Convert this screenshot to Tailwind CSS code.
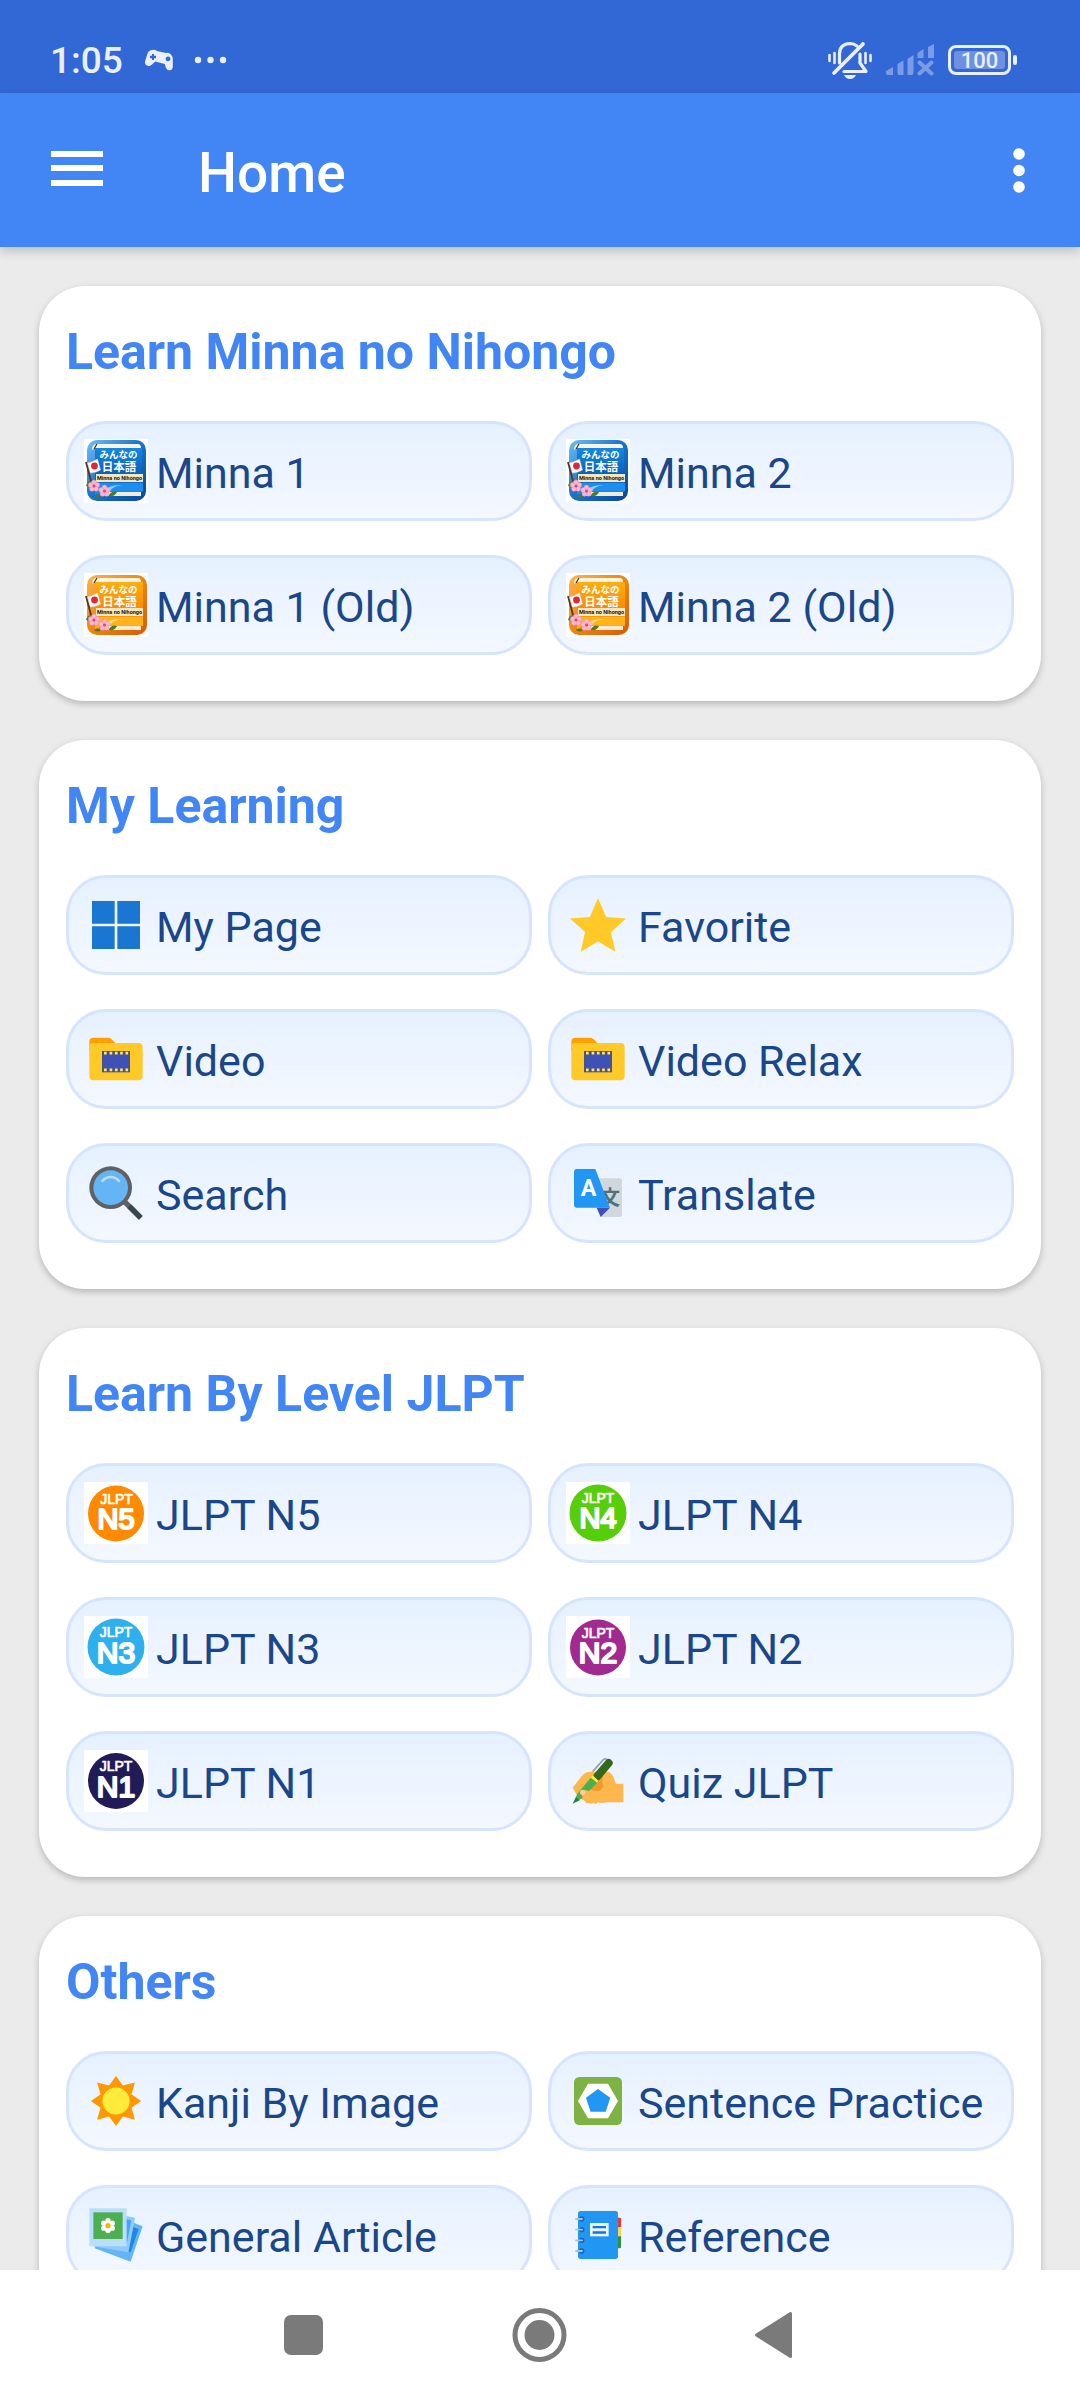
<!DOCTYPE html>
<html lang="en">
<head>
<meta charset="utf-8">
<meta name="viewport" content="width=device-width, initial-scale=1">
<title>Home</title>
<script src="https://cdn.jsdelivr.net/npm/@tailwindcss/browser@4"></script>
</head>
<body class="flex h-screen flex-col overflow-hidden bg-[#ebebeb] font-[Roboto,sans-serif]">

<!-- Shared icon art -->
<svg class="size-0 shrink-0" aria-hidden="true">
  <defs>
    <linearGradient id="blueCase" x1="0" y1="0" x2="1" y2="1"><stop offset="0" stop-color="#6fc0f7"/><stop offset=".45" stop-color="#1a78d0"/><stop offset="1" stop-color="#04489c"/></linearGradient>
    <linearGradient id="blueCover" x1="0" y1="0" x2="0" y2="1"><stop offset="0" stop-color="#1688e0"/><stop offset=".6" stop-color="#0560b8"/><stop offset="1" stop-color="#1f8ff0"/></linearGradient>
    <linearGradient id="orangeCase" x1="0" y1="0" x2="1" y2="1"><stop offset="0" stop-color="#fbb54a"/><stop offset=".45" stop-color="#f08a10"/><stop offset="1" stop-color="#d95a04"/></linearGradient>
    <linearGradient id="orangeCover" x1="0" y1="0" x2="0" y2="1"><stop offset="0" stop-color="#fdae12"/><stop offset=".6" stop-color="#f58a08"/><stop offset="1" stop-color="#ffb41c"/></linearGradient>
    <g id="blossom">
      <g fill="#f9b9d0" stroke="#e98bb0" stroke-width=".5">
        <circle cx="0" cy="-3.4" r="2.5"/><circle cx="3.2" cy="-1" r="2.5"/><circle cx="2" cy="2.8" r="2.5"/><circle cx="-2" cy="2.8" r="2.5"/><circle cx="-3.2" cy="-1" r="2.5"/>
      </g>
      <circle r="1.5" fill="#e2457e"/>
    </g>
    <g id="bookTrim">
      <path d="M12 5h42q3 0 3 4H11l-3 2q0-6 4-6z" fill="#fdf3e2"/>
      <path d="M10 10l3-5" stroke="#3a2a1c" stroke-width="1.2"/>
      <path d="M19 53h38v4H17z" fill="#f6ead6"/>
    </g>
    <g id="bookDecor">
      <path d="M12 35h47v8H12z" fill="#f6e6bd"/>
      <path d="M2 23l6 23" stroke="#5a3320" stroke-width="1.8"/>
      <path d="M3.500 24q5-1 10-4l3 11q-5 3-10 3z" fill="#fff" stroke="#e3d8d8" stroke-width=".5"/>
      <circle cx="10.500" cy="27" r="3.400" fill="#e0263a"/>
      <path d="M2 47q1-5 6-5l-2 6zM25 56q3-5 8-3-2 5-8 4zM10 57q3-3 7 0-3 3-7 0z" fill="#4d7d22"/>
      <use href="#blossom" x="10" y="47"/><use href="#blossom" x="20.500" y="52"/>
    </g>
    <symbol id="bookBlue" viewBox="0 0 64 64">
      <path d="M0 0h64v64H0z" fill="#fff"/>
      <rect x="3" y="1" width="59" height="61" rx="10" fill="url(#blueCase)"/>
      <path d="M11 9h47v44H18l-7 3z" fill="url(#blueCover)"/>
      <use href="#bookTrim"/>
      <path d="M12 44h47v8H14z" fill="#1e8df0"/><path d="M18 52q10-7 20-6-9 1-12 6z" fill="#8fd0ff"/>
      <use href="#bookDecor"/>
    </symbol>
    <symbol id="bookOrange" viewBox="0 0 64 64">
      <path d="M0 0h64v64H0z" fill="#fff"/>
      <rect x="3" y="2" width="60" height="60" rx="10" fill="url(#orangeCase)"/>
      <path d="M11 9h48v44H18l-7 3z" fill="url(#orangeCover)"/>
      <use href="#bookTrim"/>
      <path d="M12 44h47v8H14z" fill="#ffb21a"/><path d="M18 52q10-7 20-6-9 1-12 6z" fill="#ffe08a"/>
      <use href="#bookDecor"/>
    </symbol>
    <symbol id="folder" viewBox="0 0 48 48">
      <path d="M4 18v-7a3 3 0 0 1 3-3h11q1.500 0 2.500 1l4 4v5z" fill="#ffa000"/>
      <rect x="4" y="12" width="40" height="28" rx="3" fill="#ffca28"/>
      <path d="M13.500 18h21v16h-21z" fill="#46547e"/>
      <path d="M14.500 20.800h19v10.400h-19z" fill="#3f51b5"/>
      <path d="M15 18.600h2v2h-2zm4.200 0h2v2h-2zm4 0h2v2h-2zm3.900 0h2v2h-2zm4 0h2v2h-2zM15 31.200h2v2h-2zm4.200 0h2v2h-2zm4 0h2v2h-2zm3.900 0h2v2h-2zm4 0h2v2h-2z" fill="#ffe082"/>
    </symbol>
  </defs>
</svg>

<!-- System status bar -->
<div class="flex h-[93px] shrink-0 items-center justify-between bg-[#3267d6] pt-[27px] pr-[63px] pl-[50px] text-[#e9effd]">
  <div class="flex items-center">
    <span class="pt-[2px] text-[37px] leading-[44px] font-medium">1:05</span>
    <svg class="ml-[21px] h-[22px] w-[30px]" viewBox="0 0 30 22"><path fill="currentColor" fill-rule="evenodd" d="M8 1q3-.8 5 1l9 2q3-.8 5 1.500 2 2 1.800 5V18q-.5 3.500-3.500 3.200-2.500 0-3.500-2.700l-1-3.500-9.500-2.500-3 2.800q-2 2.200-4.500 1.500Q.500 16 1 12.500l2.500-8Q5 1.200 8 1zM8 5v1.800H6v2.400h2V11h2V9.200h2V6.800h-2V5zm16 2.500a2.400 2.400 0 1 0 .01 0z"/></svg>
    <svg class="ml-[20px] h-[8px] w-[34px]" viewBox="0 0 34 8" fill="currentColor"><circle cx="4" cy="4" r="3.200"/><circle cx="16.500" cy="4" r="3.200"/><circle cx="29" cy="4" r="3.200"/></svg>
  </div>
  <div class="flex items-center">
    <svg class="h-[40px] w-[46px]" viewBox="0 0 46 40" fill="none" stroke="currentColor" stroke-width="3.200" stroke-linecap="round" stroke-linejoin="round">
      <path d="M2.500 15v6M7.500 13v10M38.500 13v10M43.500 15v6" stroke-width="2.600"/>
      <path d="M12.500 23V14q0-10 10.500-10.500 4 0 7 2.500M33 14v9l6 8.500H17"/>
      <path d="M7 33L36 4" stroke-width="3.800"/>
      <path d="M17 35h12q-2 4-6 4t-6-4z" fill="currentColor" stroke="none"/>
    </svg>
    <svg class="ml-[12px] h-[32px] w-[50px]" viewBox="0 0 50 32" fill="#7c9be6"><path d="M1 27l7-4v8H3q-2 0-2-2zM12.500 20l6-3.500V31h-4q-2 0-2-2zM22.500 15l6-4v18q0 2-2 2h-4zM32.500 9l6-4v9h-6zM43 3l6-3v14h-6z"/><path d="M34.500 18.500l12 11M46.500 18.500l-12 11" stroke="#7c9be6" stroke-width="4" stroke-linecap="round"/></svg>
    <div class="ml-[13px] flex items-center gap-[2px]">
      <div class="h-[30px] w-[63px] rounded-[8px] border-[3px] border-current p-[3px]"><div class="flex h-full items-center justify-center rounded-[3px] bg-[#6d90e2] pt-[2px] text-[22px] leading-[18px] font-medium">100</div></div>
      <div class="h-[10px] w-[4px] rounded-[2px] bg-current"></div>
    </div>
  </div>
</div>

<!-- App bar -->
<header class="z-10 flex h-[154px] shrink-0 items-center bg-[#4286f5] pr-[35px] pl-[51px] text-white shadow-[0_4px_10px_rgba(0,0,0,0.2)]">
  <button type="button" aria-label="Open menu" class="mb-[4px]"><svg class="h-[36px] w-[52px]" viewBox="0 0 52 36" fill="currentColor"><path d="M0 1h52v6H0zM0 15h52v6H0zM0 30h52v6H0z"/></svg></button>
  <h1 class="ml-[95px] pt-[6px] text-[55px] leading-[64px] font-medium">Home</h1>
  <button type="button" aria-label="More options" class="ml-auto"><svg class="h-[46px] w-[44px]" viewBox="0 0 44 46" fill="currentColor"><circle cx="18" cy="7" r="5.800"/><circle cx="18" cy="23.500" r="5.800"/><circle cx="18" cy="40" r="5.800"/></svg></button>
</header>

<main class="flex min-h-0 flex-1 flex-col gap-[39px] overflow-hidden px-[39px] pt-[39px]">

  <section class="shrink-0 rounded-[46px] bg-white px-[27px] pt-[36px] pb-[46px] shadow-[0_3px_7px_rgba(0,0,0,0.22)]">
    <h2 class="mb-[39px] text-[50px] leading-[60px] font-bold text-[#4286f5]">Learn Minna no Nihongo</h2>
    <div class="grid grid-cols-2 gap-x-[16px] gap-y-[34px] text-[43px] leading-[52px] text-[#1a478a] [&_span]:pt-[4px]">
      <button type="button" class="flex h-[100px] items-center gap-[8px] rounded-[40px] border-[3px] border-[#d6e4fd] bg-linear-to-b from-[#e6f1ff] to-[#f4f8ff] pl-[15px] whitespace-nowrap">
        <svg class="size-[64px] shrink-0" viewBox="0 0 64 64"><use href="#bookBlue"/><g fill="#fff" font-family="Noto Sans CJK JP, sans-serif" font-weight="700" text-anchor="middle"><text x="34.500" y="19" font-size="9.500">みんなの</text><text x="35" y="32" font-size="11.500">日本語</text><text x="35.500" y="41" font-size="5.500" fill="#1c1408" font-family="Roboto, sans-serif">Minna no Nihongo</text></g></svg>
        <span>Minna 1</span>
      </button>
      <button type="button" class="flex h-[100px] items-center gap-[8px] rounded-[40px] border-[3px] border-[#d6e4fd] bg-linear-to-b from-[#e6f1ff] to-[#f4f8ff] pl-[15px] whitespace-nowrap">
        <svg class="size-[64px] shrink-0" viewBox="0 0 64 64"><use href="#bookBlue"/><g fill="#fff" font-family="Noto Sans CJK JP, sans-serif" font-weight="700" text-anchor="middle"><text x="34.500" y="19" font-size="9.500">みんなの</text><text x="35" y="32" font-size="11.500">日本語</text><text x="35.500" y="41" font-size="5.500" fill="#1c1408" font-family="Roboto, sans-serif">Minna no Nihongo</text></g></svg>
        <span>Minna 2</span>
      </button>
      <button type="button" class="flex h-[100px] items-center gap-[8px] rounded-[40px] border-[3px] border-[#d6e4fd] bg-linear-to-b from-[#e6f1ff] to-[#f4f8ff] pl-[15px] whitespace-nowrap">
        <svg class="size-[64px] shrink-0" viewBox="0 0 64 64"><use href="#bookOrange"/><g fill="#fff" font-family="Noto Sans CJK JP, sans-serif" font-weight="700" text-anchor="middle"><text x="34.500" y="20" font-size="9.500">みんなの</text><text x="35.500" y="33" font-size="11.500">日本語</text><text x="35.500" y="41" font-size="5.500" fill="#1c1408" font-family="Roboto, sans-serif">Minna no Nihongo</text></g></svg>
        <span>Minna 1 (Old)</span>
      </button>
      <button type="button" class="flex h-[100px] items-center gap-[8px] rounded-[40px] border-[3px] border-[#d6e4fd] bg-linear-to-b from-[#e6f1ff] to-[#f4f8ff] pl-[15px] whitespace-nowrap">
        <svg class="size-[64px] shrink-0" viewBox="0 0 64 64"><use href="#bookOrange"/><g fill="#fff" font-family="Noto Sans CJK JP, sans-serif" font-weight="700" text-anchor="middle"><text x="34.500" y="20" font-size="9.500">みんなの</text><text x="35.500" y="33" font-size="11.500">日本語</text><text x="35.500" y="41" font-size="5.500" fill="#1c1408" font-family="Roboto, sans-serif">Minna no Nihongo</text></g></svg>
        <span>Minna 2 (Old)</span>
      </button>
    </div>
  </section>

  <section class="shrink-0 rounded-[46px] bg-white px-[27px] pt-[36px] pb-[46px] shadow-[0_3px_7px_rgba(0,0,0,0.22)]">
    <h2 class="mb-[39px] text-[50px] leading-[60px] font-bold text-[#4286f5]">My Learning</h2>
    <div class="grid grid-cols-2 gap-x-[16px] gap-y-[34px] text-[43px] leading-[52px] text-[#1a478a] [&_span]:pt-[4px]">
      <button type="button" class="flex h-[100px] items-center gap-[8px] rounded-[40px] border-[3px] border-[#d6e4fd] bg-linear-to-b from-[#e6f1ff] to-[#f4f8ff] pl-[15px] whitespace-nowrap">
        <svg class="size-[64px] shrink-0" viewBox="0 0 48 48"><path fill="#1976d2" d="M6 6h17v17H6zM25 6h17v17H25zM6 25h17v17H6zM25 25h17v17H25z"/></svg>
        <span>My Page</span>
      </button>
      <button type="button" class="flex h-[100px] items-center gap-[8px] rounded-[40px] border-[3px] border-[#d6e4fd] bg-linear-to-b from-[#e6f1ff] to-[#f4f8ff] pl-[15px] whitespace-nowrap">
        <svg class="size-[64px] shrink-0" viewBox="0 0 48 48"><path fill="#ffca28" d="M24 4l6.100 14 14.900 1.200-11.300 10L37 44l-13-7.600L11 44l3.300-14.800L3 19.200 17.900 18z"/></svg>
        <span>Favorite</span>
      </button>
      <button type="button" class="flex h-[100px] items-center gap-[8px] rounded-[40px] border-[3px] border-[#d6e4fd] bg-linear-to-b from-[#e6f1ff] to-[#f4f8ff] pl-[15px] whitespace-nowrap">
        <svg class="size-[64px] shrink-0" viewBox="0 0 48 48"><use href="#folder"/></svg>
        <span>Video</span>
      </button>
      <button type="button" class="flex h-[100px] items-center gap-[8px] rounded-[40px] border-[3px] border-[#d6e4fd] bg-linear-to-b from-[#e6f1ff] to-[#f4f8ff] pl-[15px] whitespace-nowrap">
        <svg class="size-[64px] shrink-0" viewBox="0 0 48 48"><use href="#folder"/></svg>
        <span>Video Relax</span>
      </button>
      <button type="button" class="flex h-[100px] items-center gap-[8px] rounded-[40px] border-[3px] border-[#d6e4fd] bg-linear-to-b from-[#e6f1ff] to-[#f4f8ff] pl-[15px] whitespace-nowrap">
        <svg class="size-[64px] shrink-0" viewBox="0 0 48 48"><path fill="#616161" d="M29.175 31.990l2.828-2.827 12.019 12.019-2.828 2.827z"/><circle cx="20" cy="20" r="16" fill="#616161"/><path fill="#37474f" d="M32.450 35.340l2.827-2.828 8.696 8.696-2.828 2.828z"/><circle cx="20" cy="20" r="13" fill="#64b5f6"/><path fill="#bbdefb" d="M26.900 14.200c-1.700-2-4.200-3.200-6.900-3.200s-5.200 1.200-6.900 3.200c-.4.4-.3 1.100.1 1.400.4.4 1.100.3 1.400-.1C16 13.900 17.900 13 20 13s4 .9 5.400 2.500c.2.2.5.4.8.4.2 0 .5-.1.6-.2.400-.4.400-1.100.1-1.500z"/></svg>
        <span>Search</span>
      </button>
      <button type="button" class="flex h-[100px] items-center gap-[8px] rounded-[40px] border-[3px] border-[#d6e4fd] bg-linear-to-b from-[#e6f1ff] to-[#f4f8ff] pl-[15px] whitespace-nowrap">
        <svg class="size-[64px] shrink-0" viewBox="0 0 48 48"><path fill="#cfd8dc" d="M15 13h25c1.100 0 2 .9 2 2v25c0 1.100-.9 2-2 2H26z"/><text x="33" y="33" font-size="15" font-weight="700" text-anchor="middle" fill="#546e7a" font-family="Noto Sans CJK JP, sans-serif">文</text><path fill="#3f51b5" d="M26 42l-3-7h10z"/><path fill="#2196f3" d="M33 35H8c-1.100 0-2-.9-2-2V8c0-1.100.9-2 2-2h14z"/><text x="17" y="26.500" font-size="17.500" font-weight="700" text-anchor="middle" fill="#fff" font-family="Roboto, sans-serif">A</text></svg>
        <span>Translate</span>
      </button>
    </div>
  </section>

  <section class="shrink-0 rounded-[46px] bg-white px-[27px] pt-[36px] pb-[46px] shadow-[0_3px_7px_rgba(0,0,0,0.22)]">
    <h2 class="mb-[39px] text-[50px] leading-[60px] font-bold text-[#4286f5]">Learn By Level JLPT</h2>
    <div class="grid grid-cols-2 gap-x-[16px] gap-y-[34px] text-[43px] leading-[52px] text-[#1a478a] [&_span]:pt-[4px]">
      <button type="button" class="flex h-[100px] items-center gap-[8px] rounded-[40px] border-[3px] border-[#d6e4fd] bg-linear-to-b from-[#e6f1ff] to-[#f4f8ff] pl-[15px] whitespace-nowrap">
        <svg class="h-[62px] w-[64px] shrink-0 bg-white" viewBox="0 0 64 62"><circle cx="32" cy="31.500" r="28" fill="#ff8a00"/><g fill="#fff" stroke="#fff" stroke-linejoin="round" font-family="Liberation Sans, sans-serif" text-anchor="middle"><text x="32.500" y="22" font-size="14" stroke-width=".7">JLPT</text><text x="32" y="47" font-size="29" stroke-width="2.200">N5</text></g></svg>
        <span>JLPT N5</span>
      </button>
      <button type="button" class="flex h-[100px] items-center gap-[8px] rounded-[40px] border-[3px] border-[#d6e4fd] bg-linear-to-b from-[#e6f1ff] to-[#f4f8ff] pl-[15px] whitespace-nowrap">
        <svg class="h-[62px] w-[64px] shrink-0 bg-white" viewBox="0 0 64 62"><circle cx="32" cy="31" r="28.500" fill="#57ce0a"/><g fill="#fff" stroke="#fff" stroke-linejoin="round" font-family="Liberation Sans, sans-serif" text-anchor="middle"><text x="32" y="21" font-size="14" stroke-width=".7">JLPT</text><text x="32" y="46" font-size="29" stroke-width="2.200">N4</text></g></svg>
        <span>JLPT N4</span>
      </button>
      <button type="button" class="flex h-[100px] items-center gap-[8px] rounded-[40px] border-[3px] border-[#d6e4fd] bg-linear-to-b from-[#e6f1ff] to-[#f4f8ff] pl-[15px] whitespace-nowrap">
        <svg class="h-[62px] w-[64px] shrink-0 bg-white" viewBox="0 0 64 62"><circle cx="32" cy="31" r="28.500" fill="#2fb0ee"/><g fill="#fff" stroke="#fff" stroke-linejoin="round" font-family="Liberation Sans, sans-serif" text-anchor="middle"><text x="32" y="21" font-size="14" stroke-width=".7">JLPT</text><text x="32" y="47" font-size="30" stroke-width="2.200">N3</text></g></svg>
        <span>JLPT N3</span>
      </button>
      <button type="button" class="flex h-[100px] items-center gap-[8px] rounded-[40px] border-[3px] border-[#d6e4fd] bg-linear-to-b from-[#e6f1ff] to-[#f4f8ff] pl-[15px] whitespace-nowrap">
        <svg class="h-[62px] w-[64px] shrink-0 bg-white" viewBox="0 0 64 62"><circle cx="32" cy="31.500" r="28" fill="#a02a90"/><g fill="#fff" stroke="#fff" stroke-linejoin="round" font-family="Liberation Sans, sans-serif" text-anchor="middle"><text x="32" y="22" font-size="14" stroke-width=".7">JLPT</text><text x="32" y="47" font-size="30" stroke-width="2.200">N2</text></g></svg>
        <span>JLPT N2</span>
      </button>
      <button type="button" class="flex h-[100px] items-center gap-[8px] rounded-[40px] border-[3px] border-[#d6e4fd] bg-linear-to-b from-[#e6f1ff] to-[#f4f8ff] pl-[15px] whitespace-nowrap">
        <svg class="h-[62px] w-[64px] shrink-0 bg-white" viewBox="0 0 64 62"><circle cx="32" cy="31" r="28" fill="#211c58"/><g fill="#fff" stroke="#fff" stroke-linejoin="round" font-family="Liberation Sans, sans-serif" text-anchor="middle"><text x="32" y="21" font-size="14" stroke-width=".7">JLPT</text><text x="32" y="47" font-size="30" stroke-width="2.200">N1</text></g></svg>
        <span>JLPT N1</span>
      </button>
      <button type="button" class="flex h-[100px] items-center gap-[8px] rounded-[40px] border-[3px] border-[#d6e4fd] bg-linear-to-b from-[#e6f1ff] to-[#f4f8ff] pl-[15px] whitespace-nowrap">
        <svg class="size-[64px] shrink-0" viewBox="0 0 48 48">
          <path fill="#ffb74d" d="M5 29l7-9q2.500-3 6-3h12q4 0 5.500 4l2 5H43v14H30q-3 1-6 0-1.500 1.800-3.500.3-1.500 1.500-3.300.2-2 .8-3.200-1.500L9 36z"/>
          <path fill="#f09a2a" d="M22 22l6-2q-1.500 4 0 8-2 4.500-6 3.500l-6-2z"/>
          <path fill="none" stroke="#90a4ae" stroke-width="1.300" d="M20 17l8-9q1.500-1.200 3 0"/>
          <path stroke="#33691e" stroke-width="6" stroke-linecap="round" d="M32 10.500L23.500 20.500"/>
          <path stroke="#ffeb3b" stroke-width="6" d="M22.200 21.800l-1.500 1.600"/>
          <path fill="#4caf50" d="M18.600 21.500l4.700 3.800L12 37l-3.600 2.200-1.600-1.500 1.700-4.200z"/>
          <path fill="#2e7d32" d="M7.500 36l2.700 2.400L5 41z"/>
          <path fill="#ffb74d" d="M11 33q0-2.500 2.500-2.500l12 3-2 6-10-1.500z"/><circle cx="12.500" cy="32.500" r="2" fill="#ffcc9e"/>
        </svg>
        <span>Quiz JLPT</span>
      </button>
    </div>
  </section>

  <section class="shrink-0 rounded-[46px] bg-white px-[27px] pt-[36px] pb-[46px] shadow-[0_3px_7px_rgba(0,0,0,0.22)]">
    <h2 class="mb-[39px] text-[50px] leading-[60px] font-bold text-[#4286f5]">Others</h2>
    <div class="grid grid-cols-2 gap-x-[16px] gap-y-[34px] text-[43px] leading-[52px] text-[#1a478a] [&_span]:pt-[4px]">
      <button type="button" class="flex h-[100px] items-center gap-[8px] rounded-[40px] border-[3px] border-[#d6e4fd] bg-linear-to-b from-[#e6f1ff] to-[#f4f8ff] pl-[15px] whitespace-nowrap">
        <svg class="size-[64px] shrink-0" viewBox="0 0 48 48"><path fill="#ff9800" d="M24 5.200l5.200 7.200 9-2.200-2.600 8.800 7.200 5-7.200 5 2.600 9-9-2.400-5.200 7.200-5.200-7.200-9 2.400 2.600-9-7.200-5 7.200-5-2.600-8.800 9 2.200z"/><circle cx="24" cy="24" r="10.200" fill="#ffeb3b"/></svg>
        <span>Kanji By Image</span>
      </button>
      <button type="button" class="flex h-[100px] items-center gap-[8px] rounded-[40px] border-[3px] border-[#d6e4fd] bg-linear-to-b from-[#e6f1ff] to-[#f4f8ff] pl-[15px] whitespace-nowrap">
        <svg class="size-[64px] shrink-0" viewBox="0 0 48 48"><rect x="6" y="6" width="36" height="36" rx="4" fill="#7cb342"/><path fill="#fff" d="M9 24l7.500-13h15L39 24l-7.500 13h-15z"/><path fill="#2196f3" d="M24 15l9.200 6.500L29.800 32H18.400L15 21.500z"/></svg>
        <span>Sentence Practice</span>
      </button>
      <button type="button" class="flex h-[100px] items-center gap-[8px] rounded-[40px] border-[3px] border-[#d6e4fd] bg-linear-to-b from-[#e6f1ff] to-[#f4f8ff] pl-[15px] whitespace-nowrap">
        <svg class="size-[64px] shrink-0" viewBox="0 0 48 48">
          <path fill="#64b5f6" d="M17 7l27 10.500L35 44 8 34z"/><path fill="#1e88e5" d="M20 12l21 7.500-6 17.500-15-5z"/>
          <path fill="#90caf9" d="M12 6l26.300 5-5 26L6 32.300z"/><path fill="#42a5f5" d="M15 9l20.500 4-3.300 17-17-3z"/>
          <path fill="#bbdefb" d="M4 4h28v28.500H4z"/><path fill="#4caf50" d="M7 7h22v20H7z"/>
          <g fill="#fff"><circle cx="18" cy="13.300" r="2"/><circle cx="21.200" cy="15.100" r="2"/><circle cx="21.200" cy="18.900" r="2"/><circle cx="18" cy="20.700" r="2"/><circle cx="14.800" cy="18.900" r="2"/><circle cx="14.800" cy="15.100" r="2"/><circle cx="18" cy="17" r="3"/></g><circle cx="18" cy="17" r="2" fill="#ffb300"/>
        </svg>
        <span>General Article</span>
      </button>
      <button type="button" class="flex h-[100px] items-center gap-[8px] rounded-[40px] border-[3px] border-[#d6e4fd] bg-linear-to-b from-[#e6f1ff] to-[#f4f8ff] pl-[15px] whitespace-nowrap">
        <svg class="size-[64px] shrink-0" viewBox="0 0 48 48">
          <path fill="#e53935" d="M38 11h2.300a1 1 0 0 1 1 1v6H38z"/><path fill="#ffd54f" d="M38 18h3.300v7H38z"/><path fill="#388e3c" d="M38 25h3.300v8a1 1 0 0 1-1 1H38z"/>
          <rect x="9" y="6" width="30" height="36" rx="2" fill="#2196f3"/><path fill="#e8f4ff" d="M18 15h14v10H18z"/><path fill="#1976d2" d="M20 17.200h10V19H20zM20 21.200h10V23H20z"/>
          <g fill="#1565c0"><circle cx="11.800" cy="12" r="2"/><circle cx="11.800" cy="20" r="2"/><circle cx="11.800" cy="28" r="2"/><circle cx="11.800" cy="36" r="2"/></g>
          <path stroke="#b0bec5" stroke-width="1.400" stroke-linecap="round" d="M7.500 12h4.500M7.500 20h4.500M7.500 28h4.500M7.500 36h4.500"/>
        </svg>
        <span>Reference</span>
      </button>
    </div>
  </section>
</main>

<!-- System navigation -->
<nav class="z-10 flex h-[130px] shrink-0 items-center justify-center gap-[155px] bg-white text-[#7a7a7a]">
  <button type="button" aria-label="Recent apps"><svg class="size-[80px]" viewBox="0 0 80 80" fill="currentColor"><rect x="19" y="20" width="39" height="40" rx="7"/></svg></button>
  <button type="button" aria-label="Home screen"><svg class="size-[80px]" viewBox="0 0 80 80"><circle cx="39.500" cy="40" r="24.500" fill="none" stroke="currentColor" stroke-width="5"/><circle cx="39.500" cy="40" r="15" fill="currentColor"/></svg></button>
  <button type="button" aria-label="Back"><svg class="size-[80px]" viewBox="0 0 80 80" fill="currentColor" stroke="currentColor" stroke-width="3" stroke-linejoin="round"><path d="M21.500 40L55.500 18.500v43z"/></svg></button>
</nav>
</body>
</html>
